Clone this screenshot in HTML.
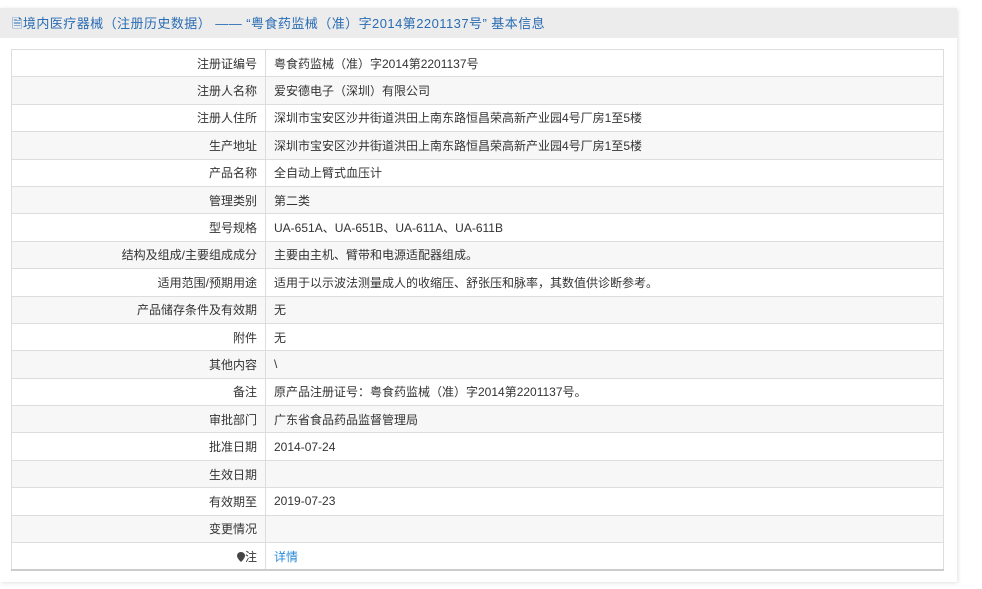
<!DOCTYPE html>
<html><head><meta charset="utf-8"><style>
body{margin:0;background:#fff;font-family:"Liberation Sans","Noto Sans CJK SC",sans-serif;}
.panel{position:absolute;left:0;top:8px;width:957px;height:574px;background:#fff;box-shadow:1px 1px 4px rgba(0,0,0,0.12);}
.hd{height:30px;background:#ececec;color:#2a6db3;font-size:13px;line-height:31px;padding-left:12px;white-space:nowrap;letter-spacing:0.45px;}
table{position:absolute;left:11px;top:41px;width:933px;border-collapse:collapse;font-size:12px;color:#333;border-bottom:2px solid #ccc;}
td{border:1px solid #ddd;height:26.4px;padding:0;}
td.l{width:245px;text-align:right;padding-right:8px;}
td.v{padding-left:8px;}
tr:nth-child(even){background:#f7f7f7;}
a{color:#2a8ad6;text-decoration:none;}
</style></head><body>
<div class="panel">
<div class="hd">🗎境内医疗器械（注册历史数据） —— “粤食药监械（准）字2014第2201137号” 基本信息</div>
<table>
<tr><td class="l">注册证编号</td><td class="v">粤食药监械（准）字2014第2201137号</td></tr>
<tr><td class="l">注册人名称</td><td class="v">爱安德电子（深圳）有限公司</td></tr>
<tr><td class="l">注册人住所</td><td class="v">深圳市宝安区沙井街道洪田上南东路恒昌荣高新产业园4号厂房1至5楼</td></tr>
<tr><td class="l">生产地址</td><td class="v">深圳市宝安区沙井街道洪田上南东路恒昌荣高新产业园4号厂房1至5楼</td></tr>
<tr><td class="l">产品名称</td><td class="v">全自动上臂式血压计</td></tr>
<tr><td class="l">管理类别</td><td class="v">第二类</td></tr>
<tr><td class="l">型号规格</td><td class="v">UA-651A、UA-651B、UA-611A、UA-611B</td></tr>
<tr><td class="l">结构及组成/主要组成成分</td><td class="v">主要由主机、臂带和电源适配器组成。</td></tr>
<tr><td class="l">适用范围/预期用途</td><td class="v">适用于以示波法测量成人的收缩压、舒张压和脉率，其数值供诊断参考。</td></tr>
<tr><td class="l">产品储存条件及有效期</td><td class="v">无</td></tr>
<tr><td class="l">附件</td><td class="v">无</td></tr>
<tr><td class="l">其他内容</td><td class="v">\</td></tr>
<tr><td class="l">备注</td><td class="v">原产品注册证号：粤食药监械（准）字2014第2201137号。</td></tr>
<tr><td class="l">审批部门</td><td class="v">广东省食品药品监督管理局</td></tr>
<tr><td class="l">批准日期</td><td class="v">2014-07-24</td></tr>
<tr><td class="l">生效日期</td><td class="v"></td></tr>
<tr><td class="l">有效期至</td><td class="v">2019-07-23</td></tr>
<tr><td class="l">变更情况</td><td class="v"></td></tr>
<tr><td class="l"><svg width="8" height="10" viewBox="0 0 8 10" style="vertical-align:-1px"><path d="M4 0C1.8 0 0 1.7 0 3.8 0 6.5 4 10 4 10s4-3.5 4-6.2C8 1.7 6.2 0 4 0z" fill="#444"/></svg>注</td><td class="v"><a>详情</a></td></tr>
</table>
</div>
</body></html>
